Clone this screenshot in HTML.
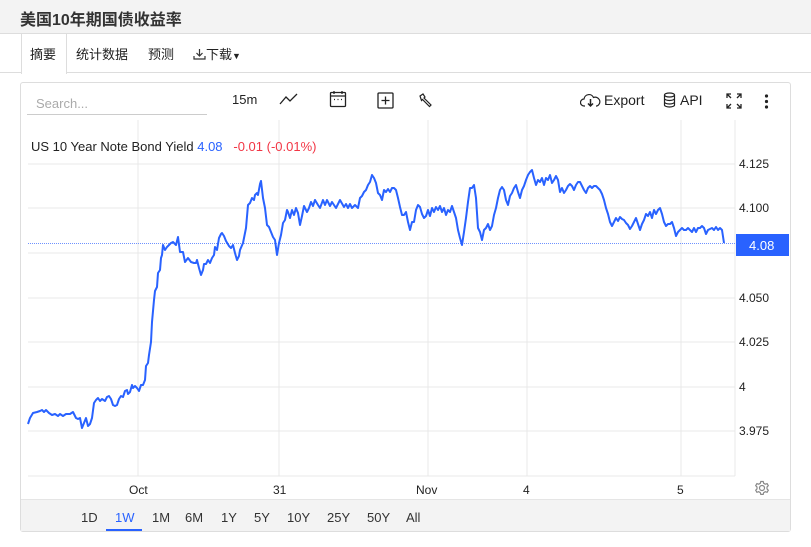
<!DOCTYPE html>
<html><head><meta charset="utf-8"><style>
*{margin:0;padding:0;box-sizing:border-box}
body{width:811px;height:547px;background:#fff;font-family:"Liberation Sans","Noto Sans CJK SC",sans-serif;position:relative;overflow:hidden;color:#222}
.hdr{position:absolute;left:0;top:0;width:811px;height:34px;background:#f3f3f3;border-bottom:1px solid #ddd}
.hdr h1{position:absolute;left:20px;top:6px;font-size:16px;font-weight:bold;color:#333}
.tabs{position:absolute;left:0;top:34px;width:811px;height:39px;border-bottom:1px solid #ddd}
.tab{position:absolute;font-size:13px;color:#222}
.act{position:absolute;left:21px;top:34px;width:46px;height:40px;background:#fff;border-left:1px solid #ddd;border-right:1px solid #ddd}
.box{position:absolute;left:20px;top:82px;width:771px;height:450px;border:1px solid #ddd;border-radius:3px}
.t{position:absolute;font-size:13px;white-space:nowrap}
.rb{position:absolute;left:21px;top:499px;width:769px;height:32px;background:#f3f3f3;border-top:1px solid #e5e5e5}
.rb span{position:absolute;top:10px;font-size:13px;color:#333}
</style></head><body>
<div class="hdr"><h1>美国10年期国债收益率</h1></div>
<div class="tabs"></div>
<div class="act"></div>
<div class="tab" style="left:30px;top:44px">摘要</div>
<div class="tab" style="left:76px;top:44px">统计数据</div>
<div class="tab" style="left:148px;top:44px">预测</div>
<div class="tab" style="left:193px;top:44px"><svg width="13" height="12" viewBox="0 0 13 12" style="vertical-align:-1px"><path d="M6.5 1v7M3.5 5l3 3 3-3M1 8v3h11V8" fill="none" stroke="#333" stroke-width="1.2"/></svg>下载<span style="font-size:9px">▼</span></div>
<div class="box"></div>
<div class="t" style="left:36px;top:96px;color:#aaa">Search...</div>
<div style="position:absolute;left:27px;top:114px;width:180px;height:1px;background:#ccc"></div>
<div class="t" style="left:232px;top:92px;color:#222">15m</div>
<svg style="position:absolute;left:279px;top:92px" width="20" height="14"><path d="M1 12l6-7 4 4 7-7" fill="none" stroke="#222" stroke-width="1.3"/></svg>
<svg style="position:absolute;left:329px;top:90px" width="18" height="18"><rect x="1.5" y="2.5" width="15" height="14" rx="1" fill="none" stroke="#222" stroke-width="1.3"/><path d="M1.5 6h15M5 1v3M13 1v3" stroke="#222" stroke-width="1.3"/><path d="M5 9.5h1M8.5 9.5h1M12 9.5h1" stroke="#222" stroke-width="1.3"/></svg>
<svg style="position:absolute;left:377px;top:92px" width="17" height="17"><rect x="1" y="1" width="15" height="15" rx="1" fill="none" stroke="#222" stroke-width="1.3"/><path d="M8.5 4.5v8M4.5 8.5h8" stroke="#222" stroke-width="1.3"/></svg>
<svg style="position:absolute;left:418px;top:93px" width="15" height="15"><path d="M2 3l3-2 2 3-1 1 7 7-1.5 1.5-7-7-1 1z" fill="none" stroke="#222" stroke-width="1.2"/></svg>
<svg style="position:absolute;left:580px;top:93px" width="21" height="15"><path d="M5 13H4a3.5 3.5 0 0 1 0-7 5 5 0 0 1 9.5-1.5A4 4 0 0 1 17 13h-1" fill="none" stroke="#222" stroke-width="1.2"/><path d="M10.5 6v7M8 10.5l2.5 2.5 2.5-2.5" fill="none" stroke="#222" stroke-width="1.5"/></svg>
<div class="t" style="left:604px;top:92px;font-size:14px">Export</div>
<svg style="position:absolute;left:663px;top:92px" width="13" height="16"><ellipse cx="6.5" cy="3" rx="5" ry="2" fill="none" stroke="#222" stroke-width="1.2"/><path d="M1.5 3v10c0 1 2 2 5 2s5-1 5-2V3M1.5 6.5c0 1 2 2 5 2s5-1 5-2M1.5 10c0 1 2 2 5 2s5-1 5-2" fill="none" stroke="#222" stroke-width="1.2"/></svg>
<div class="t" style="left:680px;top:92px;font-size:14px">API</div>
<svg style="position:absolute;left:726px;top:93px" width="16" height="16"><path d="M1 5V1h4M1 1l4 4M11 1h4v4M15 1l-4 4M1 11v4h4M1 15l4-4M15 11v4h-4M15 15l-4-4" fill="none" stroke="#222" stroke-width="1.3"/></svg>
<svg style="position:absolute;left:764px;top:94px" width="5" height="16"><circle cx="2.5" cy="2" r="1.6" fill="#222"/><circle cx="2.5" cy="7.5" r="1.6" fill="#222"/><circle cx="2.5" cy="13" r="1.6" fill="#222"/></svg>
<svg style="position:absolute;left:0;top:0" width="811" height="547">
<g stroke="#e8e8e8" stroke-width="1">
<path d="M28 164H735M28 208H735M28 253H735M28 298H735M28 342H735M28 387H735M28 431H735"/>
<path d="M138 120V476M279 120V476M428 120V476M527 120V476M681 120V476"/>
<path d="M735 120V476M28 476H735"/>
</g>
<path d="M28 243.5H735" stroke="#6f92ff" stroke-width="1" stroke-dasharray="1,1"/>
<path fill="none" stroke="#2962ff" stroke-width="2" stroke-linejoin="round" d="M28,424 L30,418 33,413 37,412 40,411 42,410 44,412 46,410 49,413 52,415 55,414 58,416 60,414 63,416 66,414 70,414 73,412 76,418 78,419 80,418 82,428 84,423 86,418 88,426 90,424 92,418 94,403 96,400 98,398 100,401 102,399 105,401 107,397 109,396 111,399 113,405 115,406 117,405 119,399 121,396 123,397 125,391 127,390 128,394 130,392 132,385 133,388 135,386 137,388 139,391 141,385 143,385 145,380 146,366 148,363 149,355 151,342 152,322 154,300 155,291 157,287 158,273 160,270 161,258 162,255 163,245 165,250 167,247 169,245 171,243 173,242 176,245 178,237 180,252 183,252 185,262 188,258 191,262 194,263 196,263 197,260 199,268 201,275 203,270 204,264 206,264 208,260 210,263 212,258 214,255 215,247 217,250 219,238 221,234 222,233 224,236 226,241 229,246 231,248 233,245 235,253 237,260 239,256 240,250 243,243 246,228 248,205 250,203 252,198 254,200 255,195 257,193 258,195 260,184 261,181 263,198 265,208 267,225 269,227 271,232 273,237 275,240 277,255 279,243 281,235 283,223 285,220 287,210 288,212 290,218 292,210 294,215 296,208 298,213 300,225 302,216 304,206 307,212 309,208 311,202 313,206 315,200 318,205 320,208 323,200 325,205 327,200 330,206 332,202 334,205 336,208 340,200 344,207 346,204 348,208 350,204 352,208 355,205 358,208 360,198 362,196 364,192 366,190 368,185 370,182 372,175 374,178 376,183 378,193 380,195 382,200 384,190 386,192 388,189 390,192 392,188 394,188 396,190 398,198 400,207 402,215 404,215 406,212 408,222 410,230 412,222 414,222 416,210 418,205 420,207 422,214 424,218 426,216 428,210 430,216 432,208 434,212 436,207 438,210 440,206 442,212 444,208 446,215 448,210 450,212 452,206 454,212 456,218 458,230 460,238 462,245 464,232 466,218 468,202 470,188 472,188 474,185 476,198 478,228 480,232 482,240 484,230 486,228 488,224 490,230 492,226 494,215 496,208 498,198 500,190 502,187 504,190 506,200 508,205 510,196 512,193 514,188 516,185 518,192 520,198 522,190 524,186 526,180 528,175 530,172 532,170 534,178 536,185 538,180 540,182 542,178 544,185 546,178 548,180 550,175 552,183 554,180 556,176 558,180 560,192 562,188 564,193 566,190 568,186 570,184 572,186 574,190 576,185 578,182 580,182 582,186 584,190 586,193 588,188 590,186 592,188 594,186 596,186 598,188 600,190 602,194 604,200 606,208 608,214 610,222 612,226 614,222 616,218 618,221 620,217 622,219 624,220 626,223 628,225 630,229 632,226 634,222 636,218 638,224 640,230 642,224 644,220 646,214 648,216 650,212 652,218 654,210 656,214 658,210 660,208 662,214 664,222 666,226 668,224 670,224 672,222 674,228 676,236 678,232 680,230 682,228 684,230 686,230 688,228 690,230 692,232 694,228 696,232 698,228 700,228 702,226 704,228 706,234 708,230 710,229 712,228 714,230 716,227 718,230 720,228 722,230 724,243"/>
<g font-family="Liberation Sans, sans-serif" font-size="12" fill="#222">
<text x="739" y="168">4.125</text><text x="739" y="212">4.100</text><text x="739" y="302">4.050</text><text x="739" y="346">4.025</text><text x="739" y="391">4</text><text x="739" y="435">3.975</text>
<text x="129" y="494">Oct</text><text x="273" y="494">31</text><text x="416" y="494">Nov</text><text x="523" y="494">4</text><text x="677" y="494">5</text>
</g>
<rect x="736" y="234" width="53" height="22" fill="#2962ff"/>
<text x="749" y="250" font-family="Liberation Sans, sans-serif" font-size="13" fill="#fff">4.08</text>
<g transform="translate(762,488)" fill="none" stroke="#888" stroke-width="1.2"><circle r="2.5"/><path d="M-1.2 -6.5h2.4l.5 1.8 1.6.9 1.8-.6 1.2 2.1-1.3 1.3v1.9l1.3 1.3-1.2 2.1-1.8-.6-1.6.9-.5 1.8h-2.4l-.5-1.8-1.6-.9-1.8.6-1.2-2.1 1.3-1.3v-1.9l-1.3-1.3 1.2-2.1 1.8.6 1.6-.9z"/></g>
</svg>
<div class="t" style="left:31px;top:139px;color:#222">US 10 Year Note Bond Yield <span style="color:#2962ff">4.08</span> &nbsp; <span style="color:#f23645">-0.01 (-0.01%)</span></div>
<div class="rb">
<span style="left:60px">1D</span><span style="left:94px;color:#2962ff">1W</span><span style="left:131px">1M</span><span style="left:164px">6M</span><span style="left:200px">1Y</span><span style="left:233px">5Y</span><span style="left:266px">10Y</span><span style="left:306px">25Y</span><span style="left:346px">50Y</span><span style="left:385px">All</span>
<div style="position:absolute;left:85px;top:29px;width:36px;height:2px;background:#2962ff"></div>
</div>
</body></html>
